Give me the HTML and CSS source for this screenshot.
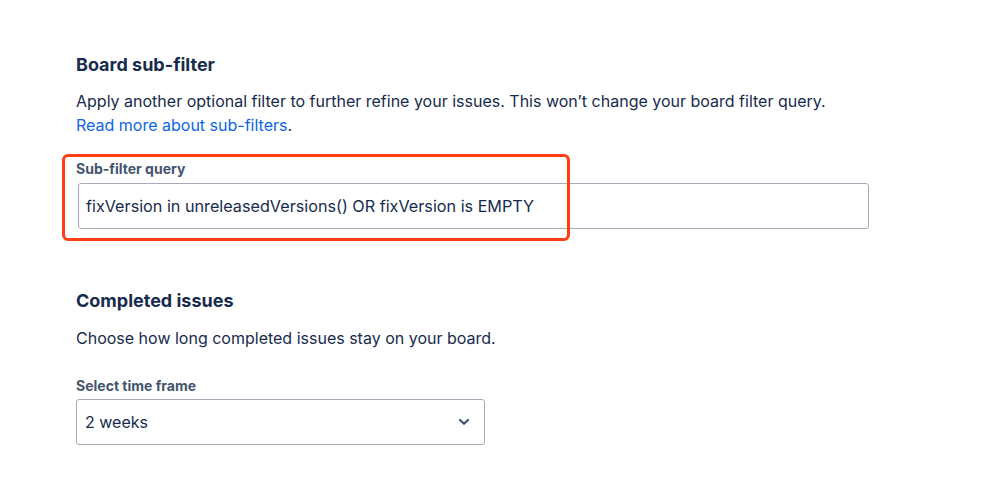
FILE: index.html
```html
<!DOCTYPE html>
<html lang="en">
<head>
<meta charset="utf-8">
<title>Board settings</title>
<link rel="stylesheet" href="styles.css">
</head>
<body>
<main class="page">
  <section class="section section-subfilter">
    <h2 class="heading">Board sub-filter</h2>
    <p class="desc">Apply another optional filter to further refine your issues. This won’t change your board filter query.<br><a class="link" href="#">Read more about sub-filters</a>.</p>
    <div class="field field-query">
      <label class="label">Sub-filter query</label>
      <div class="textbox">fixVersion in unreleasedVersions() OR fixVersion is EMPTY</div>
      <div class="highlight"></div>
    </div>
  </section>
  <section class="section section-completed">
    <h2 class="heading">Completed issues</h2>
    <p class="desc">Choose how long completed issues stay on your board.</p>
    <div class="field">
      <label class="label">Select time frame</label>
      <div class="select">
        <span>2 weeks</span>
        <svg class="chevron" width="12" height="8" viewBox="0 0 12 8"><path d="M2 2 L6 5.8 L10 2" fill="none" stroke="#44546F" stroke-width="2.2" stroke-linecap="round" stroke-linejoin="round"/></svg>
      </div>
    </div>
  </section>
</main>
</body>
</html>
```
FILE: styles.css
```css
html, body {
  margin: 0;
  padding: 0;
  background: #ffffff;
}
body {
  font-family: Inter, "Liberation Sans", sans-serif;
  color: #172B4D;
  width: 999px;
  height: 491px;
  overflow: hidden;
}
.page {
  padding: 53px 0 0 76px;
}
.section-completed {
  margin-top: 60px;
}
.heading {
  margin: 0;
  font-size: 18px;
  line-height: 24px;
  font-weight: 700;
  color: #172B4D;
}
.desc {
  margin: 12px 0 0;
  font-size: 16px;
  line-height: 24px;
}
.section-completed .desc { margin-top: 13px; }
.link {
  color: #0C66E4;
  text-decoration: none;
}
.field {
  position: relative;
  margin-top: 24px;
}
.section-completed .field { margin-top: 28px; }
.label {
  display: block;
  font-size: 14px;
  line-height: 16px;
  font-weight: 700;
  color: #44546F;
}
.textbox {
  margin: 6px 0 0 2px;
  width: 791px;
  height: 46px;
  box-sizing: border-box;
  border: 1px solid #A5ADBA;
  border-radius: 3px;
  padding: 0 7px;
  display: flex;
  align-items: center;
  font-size: 16.2px;
}
.highlight {
  position: absolute;
  left: -14px;
  top: -7px;
  width: 508px;
  height: 87px;
  box-sizing: border-box;
  border: 3px solid #FF3D12;
  border-radius: 6px;
}
.select {
  margin-top: 5px;
  width: 409px;
  height: 46px;
  box-sizing: border-box;
  border: 1px solid #A5ADBA;
  border-radius: 3px;
  padding: 0 14px 0 8px;
  display: flex;
  align-items: center;
  justify-content: space-between;
  font-size: 16px;
}
.chevron { display: block; }
```
